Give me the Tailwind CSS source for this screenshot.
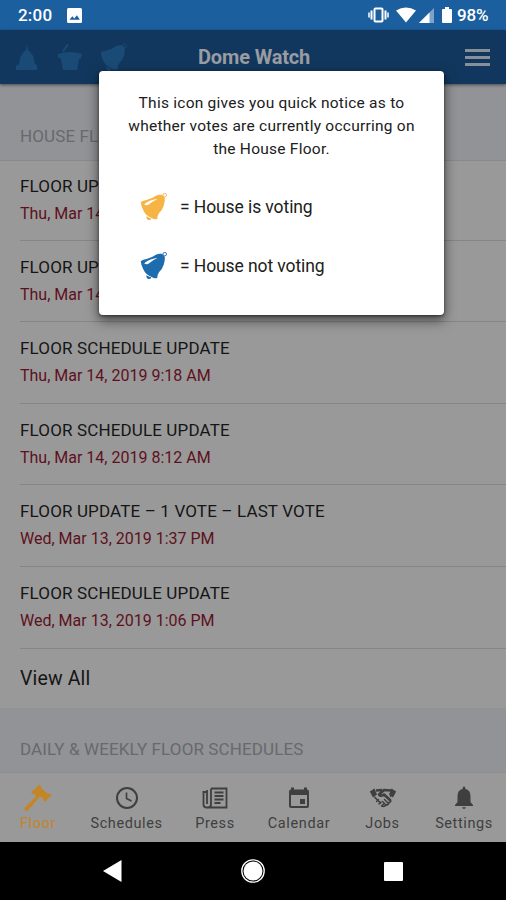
<!DOCTYPE html>
<html lang="en">
<head>
<meta charset="utf-8">
<meta name="viewport" content="width=device-width">
<title>Dome Watch</title>
<script src="https://cdn.jsdelivr.net/npm/@tailwindcss/browser@4"></script>
</head>
<body class="bg-black">
<svg class="hidden">
  <symbol id="bell" viewBox="0 0 30 30">
    <path d="M.8 10.500Q2 9 7 8Q13 6.500 17 3.500Q20 1.800 23.500 2.500L26.500 5.500Q27 9 25.500 14Q24 19 20.500 22Q18.500 25 18.500 28Q16 29.500 13 27.500Q6 25 3.500 19Q1 14 .8 10.500Z"/>
    <path d="M7 25.500Q9 27 12.200 27.800Q11.500 29.800 9 29.500Q6.300 28.500 7 25.500Z"/>
    <circle cx="26.500" cy="2.800" r="1.900" fill="none" stroke="currentColor" stroke-width="1"/>
  </symbol>
</svg>
<div class="relative flex h-[900px] w-[506px] flex-col overflow-hidden bg-[#999999] font-['Roboto',sans-serif]">
  <!-- status bar -->
  <div class="flex h-[30px] shrink-0 items-center bg-[#1c5f9f] pl-[18px] text-[17px] font-medium text-white">
    <span class="w-[36px] pt-[2px] tracking-[0.2px]">2:00</span>
    <svg class="ml-[13px] h-[15px] w-[15px]" viewBox="0 0 15 15"><rect width="15" height="15" rx="1.500" fill="#fff"/><path d="M2.500 11.800 5.300 8.300l2 2.200 2.600-3.300 3 4.600z" fill="#1c5f9f"/></svg>
    <svg class="ml-[286px] h-[16px] w-[21px]" viewBox="0 0 21 16" fill="none" stroke="#fff"><rect x="6.500" y="1.500" width="8" height="13" rx="1" stroke-width="2"/><path d="M3.500 3.500v9M17.500 3.500v9" stroke-width="2"/><path d="M1 5.500v5M20 5.500v5" stroke-width="1.500"/></svg>
    <svg class="ml-[7px] h-[16px] w-[20px]" viewBox="0 0 20 16"><path d="M0 3.500Q10-2.500 20 3.500L10 15.500z" fill="#fff"/></svg>
    <svg class="ml-[3px] h-[15px] w-[15px]" viewBox="0 0 15 15"><path d="M0 15 15 0v15z" fill="#7ba3cb"/><path d="M0 15 10.500 4.500V15z" fill="#fff"/></svg>
    <svg class="ml-[8px] h-[16px] w-[10px]" viewBox="0 0 10 16"><path d="M3 0h4v2h2q1 0 1 1v12q0 1-1 1H1q-1 0-1-1V3q0-1 1-1h2z" fill="#fff"/></svg>
    <span class="ml-[5px] pt-[2px] tracking-[-0.2px]">98%</span>
  </div>
  <!-- app header -->
  <div class="z-10 flex h-[54px] shrink-0 items-center bg-[#12375e] pl-[15px] shadow-[0_1px_3px_rgba(0,0,0,0.5)]">
    <svg class="h-[28px] w-[24px]" viewBox="0 0 24 28" fill="#1a4b76"><path d="M12 1l1 6q6 4 7 14l2 1v5H1v-4l3-2Q5 11 11 7z"/></svg>
    <svg class="ml-[19px] h-[28px] w-[25px]" viewBox="0 0 25 28" fill="#1a4b76"><path d="M9 1 4 8l1.500 1L11 2zM0 11q12-4 24 0l-1 4-2 1-2 11H5L3 16l-3-2z"/></svg>
    <svg class="ml-[17px] h-[28px] w-[28px] text-[#1a4b76]" fill="currentColor"><use href="#bell"/></svg>
    <span class="ml-[70px] w-[113px] whitespace-nowrap text-[20px] font-bold tracking-[-0.15px] text-[#999ca1]">Dome Watch</span>
    <div class="ml-[154px] mt-[1px] flex w-[25px] flex-col gap-[4px]"><i class="h-[3px] bg-[#898f99]"></i><i class="h-[3px] bg-[#898f99]"></i><i class="h-[3px] bg-[#898f99]"></i></div>
  </div>
  <!-- floor updates -->
  <div class="flex h-[76.500px] shrink-0 items-end border-b border-[#88898b] bg-[#919396] pb-[14px] pl-5 text-[17px] leading-[20px] tracking-[0.12px] text-[#67696d]">HOUSE FL</div>
  <div class="shrink-0 pl-5 text-[17px] leading-[20px] tracking-[0.14px] text-[#151515]">
    <div class="h-[80px] border-b border-[#858585] pt-[15px]"><div>FLOOR UP</div><div class="mt-[8px] text-[16px] tracking-normal text-[#5d111d]">Thu, Mar 14</div></div>
    <div class="h-[81.500px] border-b border-[#858585] pt-[16px]"><div>FLOOR UP</div><div class="mt-[8px] text-[16px] tracking-normal text-[#5d111d]">Thu, Mar 14</div></div>
    <div class="h-[81.500px] border-b border-[#858585] pt-[15.500px]"><div>FLOOR SCHEDULE UPDATE</div><div class="mt-[8.500px] text-[16px] tracking-normal text-[#5d111d]">Thu, Mar 14, 2019 9:18 AM</div></div>
    <div class="h-[81.500px] border-b border-[#858585] pt-[16px]"><div>FLOOR SCHEDULE UPDATE</div><div class="mt-[8px] text-[16px] tracking-normal text-[#5d111d]">Thu, Mar 14, 2019 8:12 AM</div></div>
    <div class="h-[81.500px] border-b border-[#858585] pt-[15.500px]"><div>FLOOR UPDATE – 1 VOTE – LAST VOTE</div><div class="mt-[8px] text-[16px] tracking-normal text-[#5d111d]">Wed, Mar 13, 2019 1:37 PM</div></div>
    <div class="h-[82px] border-b border-[#858585] pt-[16px]"><div>FLOOR SCHEDULE UPDATE</div><div class="mt-[8px] text-[16px] tracking-normal text-[#5d111d]">Wed, Mar 13, 2019 1:06 PM</div></div>
    <div class="flex h-[59.500px] items-center pt-[1px] text-[19.500px]">View All</div>
  </div>
  <div class="flex h-[65px] shrink-0 items-end bg-[#919396] pb-[14px] pl-5 text-[17px] leading-[20px] tracking-[0.12px] text-[#67696d]">DAILY &amp; WEEKLY FLOOR SCHEDULES</div>
  <!-- tabs -->
  <div class="grid h-[68.500px] shrink-0 grid-cols-[76px_101px_76px_92px_75px_86px] bg-[#999999] pt-[11px] text-center text-[14.500px] leading-[18px] tracking-[0.6px] text-[#3f3f3f] shadow-[0_-1px_1px_#8c8e90]">
    <div class="flex flex-col items-center text-[#c48527]"><svg class="h-[28px] w-[28px]" viewBox="0 0 28 28" fill="currentColor"><path d="M15.500.500 17 2l-.5 1.500 7.500 6.500 2-.5 1.500 1.500-6.500 7-1.800-1.600.3-1.400-3.500-2.500L4 26.500 1 27 .5 24l11.500-11.500-2-3-1.500.5L7 8.500z"/></svg><span class="mt-[3px]">Floor</span></div>
    <div class="flex flex-col items-center"><svg class="h-[28px] w-[24px]" viewBox="0 0 24 28" fill="none" stroke="currentColor" stroke-width="2"><circle cx="12" cy="14" r="10"/><path d="M11.500 8.500v6l5 2.500" stroke-width="1.600"/></svg><span class="mt-[3px]">Schedules</span></div>
    <div class="flex flex-col items-center"><svg class="h-[28px] w-[26px]" viewBox="0 0 26 28" fill="none" stroke="currentColor" stroke-width="1.800"><path d="M9 4.500h15.500v19H4.500q-3 0-3-3V8H5M9 4.500v16q0 3-3 3M5 6v14"/><path d="M12.500 8.500h9M12.500 12h9M12.500 15.500h9M12.500 19h6"/></svg><span class="mt-[3px]">Press</span></div>
    <div class="flex flex-col items-center"><svg class="h-[28px] w-[22px]" viewBox="0 0 22 28"><path d="M3 3.500h3v2h10v-2h3v2q2 0 2 2V22q0 2-2 2H3q-2 0-2-2V7.500q0-2 2-2zM3 11v11h16V11z" fill="currentColor" fill-rule="evenodd"/><path d="M12 15h5v5h-5z" fill="currentColor"/></svg><span class="mt-[3px]">Calendar</span></div>
    <div class="flex flex-col items-center"><svg class="h-[28px] w-[28px]" viewBox="0 0 28 28"><path d="M.8 7.500 5.500 4.500 8 10.500 4 13.500zM27.200 7.500 22.500 4.500 20 10.500 24 13.500z" fill="currentColor"/><path d="M7 6.500 13 6M22 6.500 15 6 10 10.500q1.500 2.500 5 0l6.500 6" fill="none" stroke="currentColor" stroke-width="2.600" stroke-linejoin="round"/><path d="M5.500 13 12 19.500M21.500 16q1 2-1.500 2.500-.5 2.500-3 2.500-1.500 2-4.500 1M21 12.500 23 11" fill="none" stroke="currentColor" stroke-width="1.600"/><path d="m7.500 17.500 2-2M10 20l2-2M12.500 22l2-2M15.500 15.500l3.500 3.500M13.500 17.500l3.500 3.500" stroke="currentColor" stroke-width="1.400" stroke-linecap="round"/></svg><span class="mt-[3px]">Jobs</span></div>
    <div class="flex flex-col items-center"><svg class="ml-[2px] h-[28px] w-[20px]" viewBox="0 0 20 28" fill="currentColor"><path d="M8.700 3.500q1.300-2 2.600 0v1.500q5.200 1 5.200 7v6L19 21v1H1v-1l2.500-3v-6q0-6 5.200-7zM8 23.300h4q-.8 1.700-2 1.700t-2-1.700z"/></svg><span class="mt-[3px] pl-[2px]">Settings</span></div>
  </div>
  <!-- system navigation -->
  <div class="relative grid h-[58.500px] shrink-0 grid-cols-[83px_140px_60px_80px_60px] bg-black">
    <svg class="col-start-2 mt-[18px] ml-[20px] h-[22px] w-[19px]" viewBox="0 0 19 22"><path d="M0 11 18.500 0v22z" fill="#fff"/></svg>
    <svg class="col-start-3 mt-[17px] ml-[18px] h-[24px] w-[24px]" viewBox="0 0 24 24"><circle cx="12" cy="12" r="11.200" fill="none" stroke="#fff" stroke-width="1.300"/><circle cx="12" cy="12" r="9.500" fill="#fff"/></svg>
    <div class="col-start-5 mt-[20px] ml-[21px] h-[19px] w-[19px] rounded-[1px] bg-white"></div>
  </div>
  <!-- popover -->
  <div class="absolute left-[99px] top-[71px] z-20 h-[244px] w-[345px] rounded-[4px] bg-white pt-[21px] text-[#202020] shadow-[0_5px_12px_1px_rgba(0,0,0,0.5),0_1px_3px_rgba(0,0,0,0.5)]">
    <p class="text-center text-[15.500px] leading-[23px] tracking-[0.25px]">This icon gives you quick notice as to<br>whether votes are currently occurring on<br>the House Floor.</p>
    <div class="mt-[30px] flex h-[30px] items-center pl-[41px] text-[17.500px] tracking-[-0.09px]"><svg class="h-[29px] w-[28px] text-[#f6b444]" fill="currentColor" viewBox="0 0 30 30"><use href="#bell"/><path d="M4.500 12.500Q7 15 10.500 12T19 7Q11 7.500 4.500 12.500Z" fill="#fff"/></svg><span class="ml-[12px] pt-[2px]">= House is voting</span></div>
    <div class="mt-[29px] flex h-[30px] items-center pl-[41px] text-[17.500px] tracking-[-0.09px]"><svg class="h-[29px] w-[28px] text-[#1d6cae]" fill="currentColor" viewBox="0 0 30 30"><use href="#bell"/><path d="M4.500 12.500Q7 15 10.500 12T19 7Q11 7.500 4.500 12.500Z" fill="#fff"/></svg><span class="ml-[12px] pt-[2px]">= House not voting</span></div>
  </div>
</div>
</body>
</html>
